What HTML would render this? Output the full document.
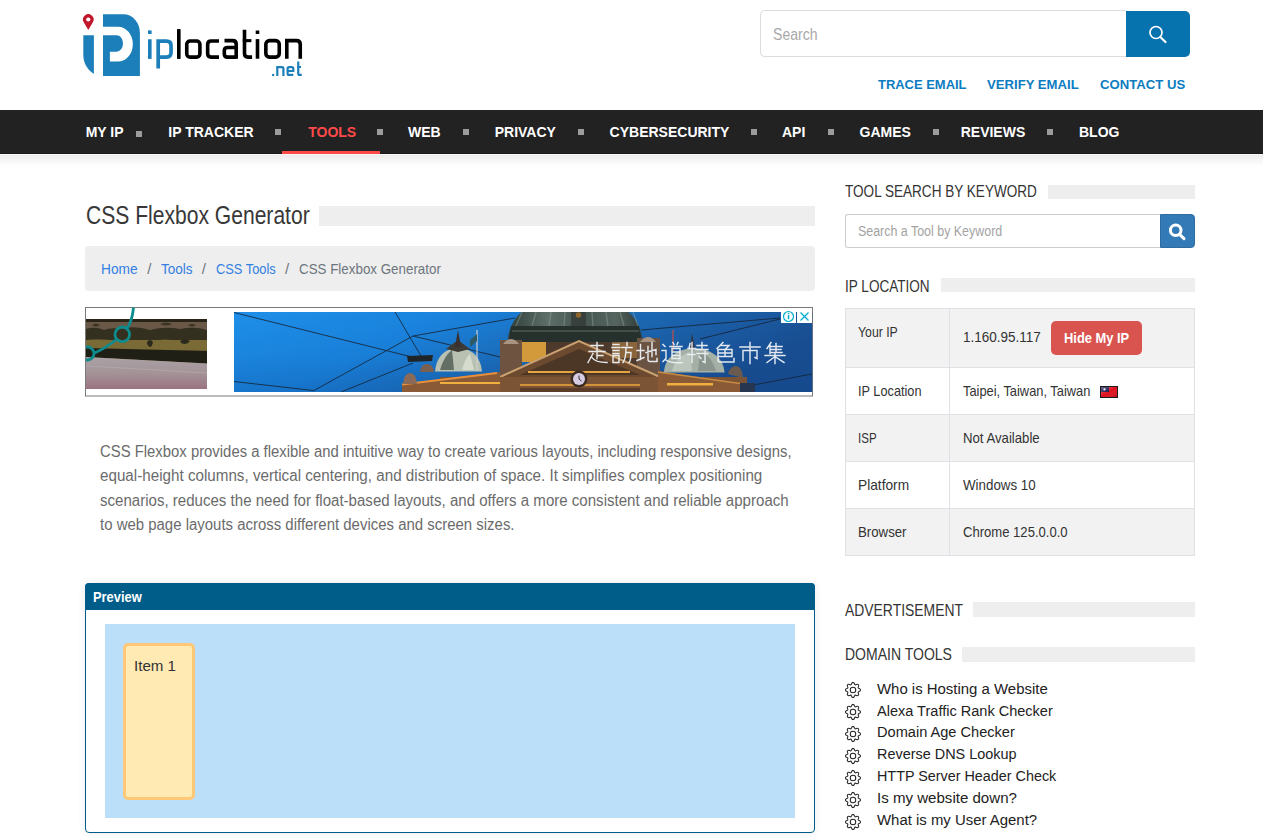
<!DOCTYPE html>
<html><head><meta charset="utf-8"><title>CSS Flexbox Generator</title>
<style>
html,body{margin:0;padding:0;background:#fff;width:1263px;height:840px;overflow:hidden;position:relative}
.b{position:absolute}
.t{position:absolute;white-space:nowrap;line-height:1;font-family:"Liberation Sans",sans-serif;transform-origin:0 0}
</style></head><body>
<svg class="b" style="left:0;top:0" width="320" height="90" viewBox="0 0 320 90">
<path fill="#c2172b" d="M88.3,29.9 L83.76,22.33 A5.3 5.3 0 1 1 92.84,22.33 Z"/>
<circle cx="88.3" cy="19.5" r="2.1" fill="#fff"/>
<g fill="#1c7fb9">
<path d="M83.3,35.2 H93.9 V74 C87.5,70 83.3,63 83.3,55 Z"/>
<path d="M103,14.2 H123.4 A16.5 18.7 0 0 1 139.9,32.9 V75.9 H103 Z"/>
</g>
<path fill="#fff" d="M103,26.7 H118 A14.8 17.45 0 0 1 118,61.6 H109.9 V51.7 H116.6 A6.4 8.25 0 0 0 116.6,35.2 H103 Z"/>
<g fill="none" stroke="#1c7fb9" stroke-width="3.7">
<path d="M158.2,68.6 V41.1 H166.5 Q171.05,41.1 171.05,45.5 V52.6 Q171.05,57.05 166.5,57.05 H158.2"/>
</g>
<g fill="#1c7fb9">
<rect x="148" y="30.4" width="3.6" height="3.6"/>
<rect x="148" y="39.25" width="3.6" height="19.65"/>
</g>
<g fill="none" stroke="#000" stroke-width="3.6">
<rect x="186.75" y="41.05" width="13.15" height="16.05" rx="3.3"/>
<path d="M219,41.05 H211.2 Q207.65,41.05 207.65,44.6 V53.5 Q207.65,57.1 211.2,57.1 H219"/>
<path d="M224.5,40.65 H232.6 Q236.2,40.65 236.2,44.3 V58.7"/>
<path d="M236.2,47.55 H227.6 Q224.3,47.55 224.3,50.8 V53.9 Q224.3,57.1 227.6,57.1 H236.2"/>
<path d="M244.5,29.8 V53.6 Q244.5,57.1 248,57.1 H252.1"/>
<rect x="265.85" y="40.65" width="13.4" height="16.45" rx="3.5"/>
<path d="M286.8,58.7 V40.65 H296.5 Q300.25,40.65 300.25,44.4 V58.7"/>
</g>
<g fill="#000">
<rect x="177" y="29.1" width="3.6" height="29.8"/>
<rect x="242.8" y="39.1" width="8.6" height="3.1"/>
<rect x="255.7" y="30.5" width="3.6" height="3.5"/>
<rect x="255.7" y="39.1" width="3.6" height="19.6"/>
</g>
<g fill="none" stroke="#1c7fb9" stroke-width="2.2">
<path d="M277.3,76 V67.1 H282 Q283.4,67.1 283.4,68.5 V76"/>
<path d="M293.3,74.9 H289.1 Q287.6,74.9 287.6,73.4 V68.6 Q287.6,67.1 289.1,67.1 H291.8 Q293.3,67.1 293.3,68.6 V71 H287.6"/>
<path d="M298.25,61.5 V73.4 Q298.25,74.9 299.8,74.9 H301.8"/>
</g>
<g fill="#1c7fb9">
<rect x="272.1" y="73.9" width="2.1" height="2.1"/>
<rect x="297.1" y="66" width="3.9" height="2"/>
</g>
</svg>
<div class="b" style="left:760px;top:10px;width:366px;height:47px;border:1px solid #dcdcdc;border-right:none;border-radius:5px 0 0 5px;box-sizing:border-box;background:#fff"></div>
<div class="t" style="left:772.7px;top:27.26px;font-size:16px;color:#a9a9a9;transform:scaleX(0.8797);">Search</div>
<div class="b" style="left:1126px;top:11px;width:64px;height:46px;background:#0673ae;border-radius:0 5px 5px 0"></div>
<svg class="b" style="left:1126px;top:11px" width="64" height="46"><circle cx="30" cy="21.5" r="6" fill="none" stroke="#fff" stroke-width="1.7"/><line x1="34.3" y1="26" x2="39.5" y2="31" stroke="#fff" stroke-width="2.2" stroke-linecap="round"/></svg>
<div class="t" style="left:878.4px;top:77.80px;font-size:13px;color:#0b7cc1;font-weight:700;transform:scaleX(0.9963);">TRACE EMAIL</div>
<div class="t" style="left:987.2px;top:77.80px;font-size:13px;color:#0b7cc1;font-weight:700;transform:scaleX(1.0102);">VERIFY EMAIL</div>
<div class="t" style="left:1099.6px;top:77.80px;font-size:13px;color:#0b7cc1;font-weight:700;transform:scaleX(1.0112);">CONTACT US</div>
<div class="b" style="left:0px;top:110px;width:1263px;height:44px;background:#222;border-bottom:1px solid #191919;box-sizing:border-box"></div>
<div class="b" style="left:0px;top:154px;width:1263px;height:1px;background:#f8f8f8"></div>
<div class="b" style="left:0px;top:155px;width:1263px;height:11px;background:linear-gradient(#ececec,#f7f7f7 55%,#fff)"></div>
<div class="t" style="left:85.7px;top:125.15px;font-size:14px;color:#fff;font-weight:700;">MY IP</div>
<div class="t" style="left:168.3px;top:125.15px;font-size:14px;color:#fff;font-weight:700;">IP TRACKER</div>
<div class="t" style="left:308.2px;top:125.15px;font-size:14px;color:#ff4a4a;font-weight:700;">TOOLS</div>
<div class="t" style="left:408.0px;top:125.15px;font-size:14px;color:#fff;font-weight:700;">WEB</div>
<div class="t" style="left:494.7px;top:125.15px;font-size:14px;color:#fff;font-weight:700;">PRIVACY</div>
<div class="t" style="left:609.6px;top:125.15px;font-size:14px;color:#fff;font-weight:700;">CYBERSECURITY</div>
<div class="t" style="left:782.0px;top:125.15px;font-size:14px;color:#fff;font-weight:700;">API</div>
<div class="t" style="left:859.5px;top:125.15px;font-size:14px;color:#fff;font-weight:700;">GAMES</div>
<div class="t" style="left:960.7px;top:125.15px;font-size:14px;color:#fff;font-weight:700;">REVIEWS</div>
<div class="t" style="left:1079.0px;top:125.15px;font-size:14px;color:#fff;font-weight:700;">BLOG</div>
<div class="b" style="left:136px;top:131px;width:6px;height:6px;background:#9c9c9c"></div>
<div class="b" style="left:275px;top:129px;width:6px;height:6px;background:#9c9c9c"></div>
<div class="b" style="left:377px;top:129px;width:6px;height:6px;background:#9c9c9c"></div>
<div class="b" style="left:463px;top:129px;width:6px;height:6px;background:#9c9c9c"></div>
<div class="b" style="left:578px;top:129px;width:6px;height:6px;background:#9c9c9c"></div>
<div class="b" style="left:751px;top:129px;width:6px;height:6px;background:#9c9c9c"></div>
<div class="b" style="left:828px;top:129px;width:6px;height:6px;background:#9c9c9c"></div>
<div class="b" style="left:933px;top:129px;width:6px;height:6px;background:#9c9c9c"></div>
<div class="b" style="left:1047px;top:129px;width:6px;height:6px;background:#9c9c9c"></div>
<div class="b" style="left:282px;top:151px;width:98px;height:3px;background:#ff4a4a"></div>
<div class="t" style="left:85.5px;top:203.34px;font-size:25px;color:#383838;transform:scaleX(0.8429);">CSS Flexbox Generator</div>
<div class="b" style="left:319px;top:206px;width:496px;height:20px;background:#eee"></div>
<div class="b" style="left:85px;top:246px;width:730px;height:45px;background:#eee;border-radius:4px"></div>
<div class="t" style="left:101.4px;top:261.10px;font-size:15px;color:#3380e3;transform:scaleX(0.9147);">Home</div>
<div class="t" style="left:147.3px;top:261.10px;font-size:15px;color:#6c757d;">/</div>
<div class="t" style="left:161.2px;top:261.10px;font-size:15px;color:#3380e3;transform:scaleX(0.9024);">Tools</div>
<div class="t" style="left:201.7px;top:261.10px;font-size:15px;color:#6c757d;">/</div>
<div class="t" style="left:216.2px;top:261.10px;font-size:15px;color:#3380e3;transform:scaleX(0.8572);">CSS Tools</div>
<div class="t" style="left:284.9px;top:261.10px;font-size:15px;color:#6c757d;">/</div>
<div class="t" style="left:299.1px;top:261.10px;font-size:15px;color:#6c757d;transform:scaleX(0.8911);">CSS Flexbox Generator</div>
<svg class="b" style="left:85px;top:307px" width="729" height="90" viewBox="85 307 729 90">
<defs>
<linearGradient id="sky" x1="0" y1="0" x2="1" y2="0.3">
<stop offset="0" stop-color="#1f8fe8"/><stop offset="0.35" stop-color="#1b84de"/><stop offset="0.62" stop-color="#1d6cb8"/><stop offset="1" stop-color="#1a4f92"/></linearGradient>
<linearGradient id="lake" x1="0" y1="0" x2="0" y2="1"><stop offset="0" stop-color="#aaa2a5"/><stop offset="0.5" stop-color="#a39397"/><stop offset="1" stop-color="#9b7281"/></linearGradient>
<linearGradient id="dome" x1="0" y1="0" x2="1" y2="0"><stop offset="0" stop-color="#2e3c38"/><stop offset="0.3" stop-color="#5d6f68"/><stop offset="0.55" stop-color="#44544f"/><stop offset="0.8" stop-color="#56655f"/><stop offset="1" stop-color="#2c3834"/></linearGradient>
<linearGradient id="bld" x1="0" y1="0" x2="0" y2="1"><stop offset="0" stop-color="#7d5232"/><stop offset="0.5" stop-color="#9a6434"/><stop offset="1" stop-color="#6e4a2c"/></linearGradient>
<linearGradient id="skyv" x1="0" y1="0" x2="0" y2="1"><stop offset="0" stop-color="#0a3a80" stop-opacity="0"/><stop offset="0.5" stop-color="#0a3a80" stop-opacity="0.05"/><stop offset="1" stop-color="#0a3a80" stop-opacity="0.22"/></linearGradient>
<clipPath id="cl"><rect x="86" y="319" width="121" height="70"/></clipPath>
<clipPath id="cm"><rect x="234" y="312" width="578.5" height="80"/></clipPath>
</defs>
<rect x="85.5" y="307.5" width="727" height="88.5" fill="#fff" stroke="#7a7a7a" stroke-width="1"/>
<g clip-path="url(#cl)">
<rect x="86" y="319" width="121" height="70" fill="#6e5e35"/>
<rect x="86" y="319" width="121" height="3" fill="#2a2418"/>
<rect x="86" y="322" width="121" height="10" fill="#6a5846"/>
<path d="M86,329 Q95,326 104,330 Q112,327 120,329 Q135,325 150,330 Q165,326 180,329 Q195,326 207,330 V341 Q195,339 180,341 Q165,338 150,341 Q135,339 120,341 Q100,338 86,340Z" fill="#33301f"/>
<path d="M92,325 q4,-3 8,0 q-4,3 -8,0Z M160,324 q6,-3 12,0 q-6,3 -12,0Z M188,325 q4,-2 8,0 q-4,3 -8,0Z" fill="#3a3526"/>
<rect x="86" y="340" width="121" height="10" fill="#7a6a36"/>
<path d="M147,342 q3,-4 6,0 q-1,5 -3,5 q-3,-1 -3,-5Z M180,341 q5,-3 10,0 q-2,3 -5,3 q-4,0 -5,-3Z" fill="#2a2a1c"/>
<path d="M86,348 L207,351 V363.5 L86,357Z" fill="#1f1f15"/>
<path d="M86,357 L207,363.5 V389 H86Z" fill="url(#lake)"/>
<path d="M86,366 Q140,369 207,373" stroke="#c0b8bc" stroke-width="1" fill="none" opacity=".45"/>
</g>
<clipPath id="cl2"><rect x="86" y="307" width="150" height="85"/></clipPath>
<g clip-path="url(#cl2)">
<path d="M133.5,307.5 Q132,322 127,328 M117,339 Q106,348 94.5,353" stroke="#0e8b8c" stroke-width="2.8" fill="none"/>
<circle cx="122.3" cy="334.3" r="7.3" stroke="#0e8b8c" stroke-width="2.8" fill="none"/>
<circle cx="87.5" cy="353.5" r="6.5" stroke="#0e8b8c" stroke-width="2.8" fill="none"/>
</g>
<g clip-path="url(#cm)">
<rect x="234" y="312" width="578.5" height="80" fill="url(#sky)"/>
<rect x="234" y="312" width="578.5" height="80" fill="url(#skyv)"/>
<g stroke="#16263a" stroke-width="1" fill="none" opacity=".85">
<path d="M234,312.5 L412,357"/>
<path d="M395,312 L421,356"/>
<path d="M313,391 L413,336 L515,318"/>
<path d="M341,392 L413,363"/>
<path d="M234,381.5 L313,390.5"/>
<path d="M413,336 L500,357"/>
<path d="M641,330 L780,318"/>
<path d="M700,339 L780,319"/>
<path d="M748,386 L812,374"/>
</g>
<path d="M407,356 L433,355 L432,361 L408,362Z" fill="#1e2428"/>
<!-- main dome -->
<path d="M507,346 L508,338 C510,325 516,314 530,306 L620,306 C634,314 640,325 642,338 L643,346Z" fill="url(#dome)"/>
<g stroke="#95a596" stroke-width="1.3" opacity=".45">
<line x1="522" y1="312" x2="516" y2="326"/><line x1="536" y1="312" x2="532" y2="326"/><line x1="551" y1="312" x2="549" y2="326"/><line x1="565" y1="312" x2="564" y2="326"/>
<line x1="592" y1="312" x2="593" y2="326"/><line x1="606" y1="312" x2="608" y2="326"/><line x1="620" y1="312" x2="624" y2="326"/><line x1="633" y1="312" x2="638" y2="326"/>
</g>
<path d="M511,326 H639 L641,342 H509Z" fill="#26302c"/>
<rect x="512" y="330" width="127" height="2" fill="#56655c" opacity=".6"/>
<circle cx="578.5" cy="315" r="2.8" fill="#f0a030"/>
<rect x="571" y="312" width="15" height="14" fill="#2a2a28" opacity=".5"/>
<!-- towers & walls -->
<rect x="500" y="340" width="22" height="52" fill="#6e5440"/>
<rect x="637" y="338" width="23" height="54" fill="#6a5242"/>
<path d="M503,344 Q511,334 519,344Z" fill="#a89480"/>
<path d="M640,342 Q648,332 656,342Z" fill="#a89480"/>
<rect x="522" y="342" width="24" height="20" fill="#d39a3c"/>
<rect x="546" y="342" width="91" height="35" fill="#4e3a2c"/>
<rect x="612" y="342" width="25" height="16" fill="#9a7040" opacity=".8"/>
<!-- pediment -->
<path d="M498,378 L579,340 L662,378Z" fill="#6c4a30"/>
<path d="M500,377 L579,341 L660,377" stroke="#c9a070" stroke-width="2" fill="none"/>
<path d="M520,375 L579,349 L640,375Z" fill="#4c3626"/>
<path d="M528,372 H630" stroke="#e6a440" stroke-width="2"/>
<!-- lower body -->
<rect x="440" y="377" width="307" height="15" fill="#7a5434"/>
<path d="M402,392 L402,384 L496,372.5 L500,372 L500,392Z" fill="#8a5a36"/>
<path d="M402,384.5 L497,373" stroke="#e8903a" stroke-width="2" fill="none"/>
<path d="M440,383 H500" stroke="#f0b040" stroke-width="1.8"/>
<rect x="520" y="384" width="120" height="2" fill="#e0a040" opacity=".85"/>
<rect x="520" y="388" width="120" height="4" fill="#5a3c28"/>
<path d="M403,384 Q404,373 410,373 Q416,373 417,384Z" fill="#8a6a58"/>
<path d="M420,372 Q421,364 427,364 Q433,364 434,372Z" fill="#7a6050"/>
<circle cx="579" cy="379" r="8.5" fill="#3a2a20"/>
<circle cx="579" cy="379" r="6" fill="#d6cde4"/>
<path d="M579,375.5 L579,379 L581.5,381" stroke="#3a3040" stroke-width="1" fill="none"/>
<!-- left dome -->
<path d="M435,371.5 Q437,350 458,347 Q480,350 482,371.5Z" fill="#b9c2b2"/>
<path d="M440,370 Q444,356 452,350 L454,370Z" fill="#3f4a44" opacity=".7"/>
<path d="M462,370 Q466,356 470,354 L474,370Z" fill="#e8ecdf" opacity=".6"/>
<path d="M446,349 L458,340 L470,349 L458,352Z" fill="#3e3a36"/>
<path d="M455,347 L458,330 L461,347Z" fill="#3a3030"/>
<line x1="477" y1="330" x2="477" y2="371" stroke="#d0d0d0" stroke-width="1.2"/>
<path d="M477,334 L470,340 L470,347 L477,341Z" fill="#2c5a66"/>
<!-- right building -->
<path d="M658,371 L740,383 L747,383 L747,392 L658,392Z" fill="#8a5a36"/>
<rect x="667" y="383" width="46" height="2.5" fill="#f0b040"/>
<path d="M658,372 L740,383.5" stroke="#c98a44" stroke-width="1.5" fill="none"/>
<path d="M663.7,372.5 Q666,350 694,348 Q722,350 724.7,372.5Z" fill="#a4b0a6"/>
<path d="M672,371 Q676,356 690,352 L692,371Z" fill="#cfd6cc" opacity=".6"/>
<path d="M698,371 L700,352 Q712,356 716,371Z" fill="#6f7c74" opacity=".5"/>
<path d="M690,349 L692,333 L695,349Z" fill="#2e3440"/>
<line x1="673" y1="330" x2="673" y2="352" stroke="#b05050" stroke-width="1.3"/>
<path d="M728,374 Q730,366 736,366 Q742,366 743,378Z" fill="#6a5a50"/>
<rect x="740" y="383" width="15" height="9" fill="#263650"/>
<g stroke="#eef2f6" stroke-width="1.45" fill="none" stroke-linecap="square" opacity=".95"><path transform="translate(587,342.5)" d="M4,3H16 M10,0V9 M2,9H18 M10,9V16 M10,13H16 M6,11L1,20 M5,15Q8,20 20,20"/><path transform="translate(612,342.5)" d="M1,2H7 M0,5H8 M1,8H7 M1,11H7 M1,13H7V20H1Z M15,0V3 M10,5H20 M14,5Q14,16 11,20 M14,10H19Q19,18 17,20"/><path transform="translate(637,342.5)" d="M0,8H7 M3.5,2V17 M0,18L7,15 M11,4V17Q11,19 13,19H20V16 M15,0V14 M9,10L19,7V12"/><path transform="translate(662,342.5)" d="M11,0L12,2 M16,0L15,2 M8,4H20 M10,6H18V16H10Z M10,9.5H18 M10,13H18 M1,2L3,4 M0,8H4V16L1,19 M3,17Q8,21 20,20"/><path transform="translate(688,342.5)" d="M2,1L1,6 M0,6H7 M0,12H7 M4,0V20 M9,3H19 M14,0V7 M8,7H20 M9,11H20 M17,9V20L15,19 M11,14L13,16"/><path transform="translate(715,342.5)" d="M8,0L2,6 M6,3H14L10,7 M3,7H17V14H3Z M10,7V14 M3,10.5H17 M3,14V18Q3,19.5 6,19.5H19V16"/><path transform="translate(740,342.5)" d="M10,0V3 M0,4.5H20 M3,8V18 M3,8H17V16L15,15 M10,4V21"/><path transform="translate(765,342.5)" d="M6,0L2,6 M5,3V11 M5,4H17 M11,1V10 M5,7H16 M5,10H17 M0,13H20 M10,11V21 M10,14L2,20 M10,14L19,20"/></g>
</g>
<rect x="781" y="310.5" width="15" height="12.5" fill="#fff"/>
<rect x="797" y="310.5" width="15" height="12.5" fill="#fff"/>
<circle cx="788.5" cy="316.5" r="5" stroke="#00aecd" stroke-width="1.2" fill="none"/>
<rect x="787.8" y="315" width="1.5" height="4.3" fill="#00aecd"/>
<rect x="787.8" y="312.8" width="1.5" height="1.4" fill="#00aecd"/>
<path d="M800.5,312.5 L808.5,320.5 M808.5,312.5 L800.5,320.5" stroke="#00aecd" stroke-width="1.3"/>
</svg>
<div class="t" style="left:100.0px;top:444.39px;font-size:15.6px;color:#6b6b6b;transform:scaleX(0.9534);">CSS Flexbox provides a flexible and intuitive way to create various layouts, including responsive designs,</div>
<div class="t" style="left:100.0px;top:468.49px;font-size:15.6px;color:#6b6b6b;transform:scaleX(0.9746);">equal-height columns, vertical centering, and distribution of space. It simplifies complex positioning</div>
<div class="t" style="left:100.0px;top:492.59px;font-size:15.6px;color:#6b6b6b;transform:scaleX(0.9657);">scenarios, reduces the need for float-based layouts, and offers a more consistent and reliable approach</div>
<div class="t" style="left:100.0px;top:516.69px;font-size:15.6px;color:#6b6b6b;transform:scaleX(0.9590);">to web page layouts across different devices and screen sizes.</div>
<div class="b" style="left:85px;top:583px;width:730px;height:250px;border:1px solid #005d8a;border-radius:4px;box-sizing:border-box;background:#fff;box-shadow:0 0 8px rgba(0,0,0,0.08)"></div>
<div class="b" style="left:85px;top:583px;width:730px;height:27px;background:#005d8a;border-radius:4px 4px 0 0"></div>
<div class="t" style="left:92.9px;top:590.05px;font-size:14px;color:#fff;font-weight:700;transform:scaleX(0.9202);">Preview</div>
<div class="b" style="left:105px;top:624px;width:690px;height:194px;background:#bbdef9"></div>
<div class="b" style="left:123px;top:643px;width:72px;height:157px;background:#ffeab3;border:3px solid #ffc876;border-radius:5px;box-sizing:border-box"></div>
<div class="t" style="left:133.8px;top:657.88px;font-size:15.5px;color:#333;transform:scaleX(0.9751);">Item 1</div>
<div class="t" style="left:845.0px;top:183.22px;font-size:16.4px;color:#333;transform:scaleX(0.8273);">TOOL SEARCH BY KEYWORD</div>
<div class="b" style="left:1048px;top:185px;width:147px;height:14px;background:#eee"></div>
<div class="b" style="left:845px;top:214px;width:315px;height:34px;border:1px solid #c9ced3;border-right:none;border-radius:3px 0 0 3px;box-sizing:border-box;background:#fff"></div>
<div class="t" style="left:857.8px;top:224.15px;font-size:14px;color:#a3a3a3;transform:scaleX(0.8880);">Search a Tool by Keyword</div>
<div class="b" style="left:1160px;top:214px;width:35px;height:34px;background:#337ab7;border:1px solid #2e6da4;box-sizing:border-box;border-radius:0 4px 4px 0"></div>
<svg class="b" style="left:1160px;top:214px" width="35" height="34"><circle cx="15.7" cy="16.3" r="5.3" fill="none" stroke="#fff" stroke-width="3"/><line x1="19.5" y1="20.3" x2="24" y2="24.6" stroke="#fff" stroke-width="3" stroke-linecap="round"/></svg>
<div class="t" style="left:845.0px;top:277.82px;font-size:16.4px;color:#333;transform:scaleX(0.8273);">IP LOCATION</div>
<div class="b" style="left:941px;top:278px;width:254px;height:14px;background:#eee"></div>
<div class="b" style="left:845px;top:308px;width:350px;height:60px;background:#f2f2f2;border:1px solid #dee2e6;box-sizing:border-box"></div>
<div class="b" style="left:845px;top:367px;width:350px;height:48px;background:#fff;border:1px solid #dee2e6;box-sizing:border-box"></div>
<div class="b" style="left:845px;top:414px;width:350px;height:48px;background:#f2f2f2;border:1px solid #dee2e6;box-sizing:border-box"></div>
<div class="b" style="left:845px;top:461px;width:350px;height:48px;background:#fff;border:1px solid #dee2e6;box-sizing:border-box"></div>
<div class="b" style="left:845px;top:508px;width:350px;height:48px;background:#f2f2f2;border:1px solid #dee2e6;box-sizing:border-box"></div>
<div class="b" style="left:949px;top:308px;width:1px;height:248px;background:#dee2e6"></div>
<div class="t" style="left:858.3px;top:324.73px;font-size:14.5px;color:#333;transform:scaleX(0.8463);">Your IP</div>
<div class="t" style="left:963.3px;top:329.83px;font-size:14.5px;color:#333;transform:scaleX(0.9307);">1.160.95.117</div>
<div class="b" style="left:1051px;top:321px;width:91px;height:34px;background:#d9534f;border-radius:5px"></div>
<div class="t" style="left:1064.3px;top:331.15px;font-size:14px;color:#fff;font-weight:700;transform:scaleX(0.9210);">Hide My IP</div>
<div class="t" style="left:858.3px;top:383.93px;font-size:14.5px;color:#333;transform:scaleX(0.8784);">IP Location</div>
<div class="t" style="left:962.8px;top:383.93px;font-size:14.5px;color:#333;transform:scaleX(0.8855);">Taipei, Taiwan, Taiwan</div>
<svg class="b" style="left:1099px;top:385px" width="20" height="14" viewBox="0 0 20 14">
<defs><linearGradient id="fg" x1="0" y1="0" x2="1" y2="1"><stop offset="0" stop-color="#fff" stop-opacity=".35"/><stop offset=".5" stop-color="#fff" stop-opacity="0"/><stop offset="1" stop-color="#000" stop-opacity=".2"/></linearGradient></defs>
<rect x="1" y="1" width="18" height="12" fill="#1a1a1a"/>
<rect x="2" y="2" width="16" height="10" fill="#e0101e"/>
<rect x="2" y="2" width="8" height="5" fill="#1b1650"/>
<circle cx="5.5" cy="4.3" r="1.1" fill="#fff"/>
<rect x="2" y="2" width="16" height="10" fill="url(#fg)"/>
</svg>
<div class="t" style="left:858.1px;top:430.63px;font-size:14.5px;color:#333;transform:scaleX(0.7958);">ISP</div>
<div class="t" style="left:962.5px;top:430.63px;font-size:14.5px;color:#333;transform:scaleX(0.9090);">Not Available</div>
<div class="t" style="left:858.1px;top:477.93px;font-size:14.5px;color:#333;transform:scaleX(0.9465);">Platform</div>
<div class="t" style="left:962.5px;top:477.93px;font-size:14.5px;color:#333;transform:scaleX(0.9205);">Windows 10</div>
<div class="t" style="left:858.1px;top:524.93px;font-size:14.5px;color:#333;transform:scaleX(0.9120);">Browser</div>
<div class="t" style="left:962.5px;top:524.93px;font-size:14.5px;color:#333;transform:scaleX(0.9011);">Chrome 125.0.0.0</div>
<div class="t" style="left:845.0px;top:601.82px;font-size:16.4px;color:#333;transform:scaleX(0.8482);">ADVERTISEMENT</div>
<div class="b" style="left:973px;top:602px;width:222px;height:15px;background:#eee"></div>
<div class="t" style="left:845.0px;top:646.42px;font-size:16.4px;color:#333;transform:scaleX(0.8549);">DOMAIN TOOLS</div>
<div class="b" style="left:962px;top:647px;width:233px;height:15px;background:#eee"></div>
<svg class="b" style="left:845px;top:682.0px" width="16" height="16" viewBox="0 0 16 16"><path fill="#222" d="M8 4.754a3.246 3.246 0 1 0 0 6.492 3.246 3.246 0 0 0 0-6.492zM5.754 8a2.246 2.246 0 1 1 4.492 0 2.246 2.246 0 0 1-4.492 0z M9.796 1.343c-.527-1.79-3.065-1.79-3.592 0l-.094.319a.873.873 0 0 1-1.255.52l-.292-.16c-1.64-.892-3.433.902-2.54 2.541l.159.292a.873.873 0 0 1-.52 1.255l-.319.094c-1.79.527-1.79 3.065 0 3.592l.319.094a.873.873 0 0 1 .52 1.255l-.16.292c-.892 1.64.901 3.434 2.541 2.54l.292-.159a.873.873 0 0 1 1.255.52l.094.319c.527 1.79 3.065 1.79 3.592 0l.094-.319a.873.873 0 0 1 1.255-.52l.292.16c1.64.893 3.434-.902 2.54-2.541l-.159-.292a.873.873 0 0 1 .52-1.255l.319-.094c1.79-.527 1.79-3.065 0-3.592l-.319-.094a.873.873 0 0 1-.52-1.255l.16-.292c.893-1.64-.902-3.433-2.541-2.54l-.292.159a.873.873 0 0 1-1.255-.52l-.094-.319zm-2.633.283c.246-.835 1.428-.835 1.674 0l.094.319a1.873 1.873 0 0 0 2.693 1.115l.291-.16c.764-.415 1.6.42 1.184 1.185l-.159.292a1.873 1.873 0 0 0 1.116 2.692l.318.094c.835.246.835 1.428 0 1.674l-.319.094a1.873 1.873 0 0 0-1.115 2.693l.16.291c.415.764-.42 1.6-1.185 1.184l-.291-.159a1.873 1.873 0 0 0-2.693 1.116l-.094.318c-.246.835-1.428.835-1.674 0l-.094-.319a1.873 1.873 0 0 0-2.692-1.115l-.292.16c-.764.415-1.6-.42-1.184-1.185l.159-.291A1.873 1.873 0 0 0 1.945 8.93l-.319-.094c-.835-.246-.835-1.428 0-1.674l.319-.094A1.873 1.873 0 0 0 3.06 4.377l-.16-.292c-.415-.764.42-1.6 1.185-1.184l.292.159a1.873 1.873 0 0 0 2.692-1.115l.094-.319z"/></svg>
<div class="t" style="left:876.6px;top:680.68px;font-size:15.5px;color:#222;transform:scaleX(0.9634);">Who is Hosting a Website</div>
<svg class="b" style="left:845px;top:704.0px" width="16" height="16" viewBox="0 0 16 16"><path fill="#222" d="M8 4.754a3.246 3.246 0 1 0 0 6.492 3.246 3.246 0 0 0 0-6.492zM5.754 8a2.246 2.246 0 1 1 4.492 0 2.246 2.246 0 0 1-4.492 0z M9.796 1.343c-.527-1.79-3.065-1.79-3.592 0l-.094.319a.873.873 0 0 1-1.255.52l-.292-.16c-1.64-.892-3.433.902-2.54 2.541l.159.292a.873.873 0 0 1-.52 1.255l-.319.094c-1.79.527-1.79 3.065 0 3.592l.319.094a.873.873 0 0 1 .52 1.255l-.16.292c-.892 1.64.901 3.434 2.541 2.54l.292-.159a.873.873 0 0 1 1.255.52l.094.319c.527 1.79 3.065 1.79 3.592 0l.094-.319a.873.873 0 0 1 1.255-.52l.292.16c1.64.893 3.434-.902 2.54-2.541l-.159-.292a.873.873 0 0 1 .52-1.255l.319-.094c1.79-.527 1.79-3.065 0-3.592l-.319-.094a.873.873 0 0 1-.52-1.255l.16-.292c.893-1.64-.902-3.433-2.541-2.54l-.292.159a.873.873 0 0 1-1.255-.52l-.094-.319zm-2.633.283c.246-.835 1.428-.835 1.674 0l.094.319a1.873 1.873 0 0 0 2.693 1.115l.291-.16c.764-.415 1.6.42 1.184 1.185l-.159.292a1.873 1.873 0 0 0 1.116 2.692l.318.094c.835.246.835 1.428 0 1.674l-.319.094a1.873 1.873 0 0 0-1.115 2.693l.16.291c.415.764-.42 1.6-1.185 1.184l-.291-.159a1.873 1.873 0 0 0-2.693 1.116l-.094.318c-.246.835-1.428.835-1.674 0l-.094-.319a1.873 1.873 0 0 0-2.692-1.115l-.292.16c-.764.415-1.6-.42-1.184-1.185l.159-.291A1.873 1.873 0 0 0 1.945 8.93l-.319-.094c-.835-.246-.835-1.428 0-1.674l.319-.094A1.873 1.873 0 0 0 3.06 4.377l-.16-.292c-.415-.764.42-1.6 1.185-1.184l.292.159a1.873 1.873 0 0 0 2.692-1.115l.094-.319z"/></svg>
<div class="t" style="left:876.6px;top:702.58px;font-size:15.5px;color:#222;transform:scaleX(0.9375);">Alexa Traffic Rank Checker</div>
<svg class="b" style="left:845px;top:725.9px" width="16" height="16" viewBox="0 0 16 16"><path fill="#222" d="M8 4.754a3.246 3.246 0 1 0 0 6.492 3.246 3.246 0 0 0 0-6.492zM5.754 8a2.246 2.246 0 1 1 4.492 0 2.246 2.246 0 0 1-4.492 0z M9.796 1.343c-.527-1.79-3.065-1.79-3.592 0l-.094.319a.873.873 0 0 1-1.255.52l-.292-.16c-1.64-.892-3.433.902-2.54 2.541l.159.292a.873.873 0 0 1-.52 1.255l-.319.094c-1.79.527-1.79 3.065 0 3.592l.319.094a.873.873 0 0 1 .52 1.255l-.16.292c-.892 1.64.901 3.434 2.541 2.54l.292-.159a.873.873 0 0 1 1.255.52l.094.319c.527 1.79 3.065 1.79 3.592 0l.094-.319a.873.873 0 0 1 1.255-.52l.292.16c1.64.893 3.434-.902 2.54-2.541l-.159-.292a.873.873 0 0 1 .52-1.255l.319-.094c1.79-.527 1.79-3.065 0-3.592l-.319-.094a.873.873 0 0 1-.52-1.255l.16-.292c.893-1.64-.902-3.433-2.541-2.54l-.292.159a.873.873 0 0 1-1.255-.52l-.094-.319zm-2.633.283c.246-.835 1.428-.835 1.674 0l.094.319a1.873 1.873 0 0 0 2.693 1.115l.291-.16c.764-.415 1.6.42 1.184 1.185l-.159.292a1.873 1.873 0 0 0 1.116 2.692l.318.094c.835.246.835 1.428 0 1.674l-.319.094a1.873 1.873 0 0 0-1.115 2.693l.16.291c.415.764-.42 1.6-1.185 1.184l-.291-.159a1.873 1.873 0 0 0-2.693 1.116l-.094.318c-.246.835-1.428.835-1.674 0l-.094-.319a1.873 1.873 0 0 0-2.692-1.115l-.292.16c-.764.415-1.6-.42-1.184-1.185l.159-.291A1.873 1.873 0 0 0 1.945 8.93l-.319-.094c-.835-.246-.835-1.428 0-1.674l.319-.094A1.873 1.873 0 0 0 3.06 4.377l-.16-.292c-.415-.764.42-1.6 1.185-1.184l.292.159a1.873 1.873 0 0 0 2.692-1.115l.094-.319z"/></svg>
<div class="t" style="left:876.6px;top:724.48px;font-size:15.5px;color:#222;transform:scaleX(0.9408);">Domain Age Checker</div>
<svg class="b" style="left:845px;top:747.9px" width="16" height="16" viewBox="0 0 16 16"><path fill="#222" d="M8 4.754a3.246 3.246 0 1 0 0 6.492 3.246 3.246 0 0 0 0-6.492zM5.754 8a2.246 2.246 0 1 1 4.492 0 2.246 2.246 0 0 1-4.492 0z M9.796 1.343c-.527-1.79-3.065-1.79-3.592 0l-.094.319a.873.873 0 0 1-1.255.52l-.292-.16c-1.64-.892-3.433.902-2.54 2.541l.159.292a.873.873 0 0 1-.52 1.255l-.319.094c-1.79.527-1.79 3.065 0 3.592l.319.094a.873.873 0 0 1 .52 1.255l-.16.292c-.892 1.64.901 3.434 2.541 2.54l.292-.159a.873.873 0 0 1 1.255.52l.094.319c.527 1.79 3.065 1.79 3.592 0l.094-.319a.873.873 0 0 1 1.255-.52l.292.16c1.64.893 3.434-.902 2.54-2.541l-.159-.292a.873.873 0 0 1 .52-1.255l.319-.094c1.79-.527 1.79-3.065 0-3.592l-.319-.094a.873.873 0 0 1-.52-1.255l.16-.292c.893-1.64-.902-3.433-2.541-2.54l-.292.159a.873.873 0 0 1-1.255-.52l-.094-.319zm-2.633.283c.246-.835 1.428-.835 1.674 0l.094.319a1.873 1.873 0 0 0 2.693 1.115l.291-.16c.764-.415 1.6.42 1.184 1.185l-.159.292a1.873 1.873 0 0 0 1.116 2.692l.318.094c.835.246.835 1.428 0 1.674l-.319.094a1.873 1.873 0 0 0-1.115 2.693l.16.291c.415.764-.42 1.6-1.185 1.184l-.291-.159a1.873 1.873 0 0 0-2.693 1.116l-.094.318c-.246.835-1.428.835-1.674 0l-.094-.319a1.873 1.873 0 0 0-2.692-1.115l-.292.16c-.764.415-1.6-.42-1.184-1.185l.159-.291A1.873 1.873 0 0 0 1.945 8.93l-.319-.094c-.835-.246-.835-1.428 0-1.674l.319-.094A1.873 1.873 0 0 0 3.06 4.377l-.16-.292c-.415-.764.42-1.6 1.185-1.184l.292.159a1.873 1.873 0 0 0 2.692-1.115l.094-.319z"/></svg>
<div class="t" style="left:876.6px;top:746.38px;font-size:15.5px;color:#222;transform:scaleX(0.9306);">Reverse DNS Lookup</div>
<svg class="b" style="left:845px;top:769.8px" width="16" height="16" viewBox="0 0 16 16"><path fill="#222" d="M8 4.754a3.246 3.246 0 1 0 0 6.492 3.246 3.246 0 0 0 0-6.492zM5.754 8a2.246 2.246 0 1 1 4.492 0 2.246 2.246 0 0 1-4.492 0z M9.796 1.343c-.527-1.79-3.065-1.79-3.592 0l-.094.319a.873.873 0 0 1-1.255.52l-.292-.16c-1.64-.892-3.433.902-2.54 2.541l.159.292a.873.873 0 0 1-.52 1.255l-.319.094c-1.79.527-1.79 3.065 0 3.592l.319.094a.873.873 0 0 1 .52 1.255l-.16.292c-.892 1.64.901 3.434 2.541 2.54l.292-.159a.873.873 0 0 1 1.255.52l.094.319c.527 1.79 3.065 1.79 3.592 0l.094-.319a.873.873 0 0 1 1.255-.52l.292.16c1.64.893 3.434-.902 2.54-2.541l-.159-.292a.873.873 0 0 1 .52-1.255l.319-.094c1.79-.527 1.79-3.065 0-3.592l-.319-.094a.873.873 0 0 1-.52-1.255l.16-.292c.893-1.64-.902-3.433-2.541-2.54l-.292.159a.873.873 0 0 1-1.255-.52l-.094-.319zm-2.633.283c.246-.835 1.428-.835 1.674 0l.094.319a1.873 1.873 0 0 0 2.693 1.115l.291-.16c.764-.415 1.6.42 1.184 1.185l-.159.292a1.873 1.873 0 0 0 1.116 2.692l.318.094c.835.246.835 1.428 0 1.674l-.319.094a1.873 1.873 0 0 0-1.115 2.693l.16.291c.415.764-.42 1.6-1.185 1.184l-.291-.159a1.873 1.873 0 0 0-2.693 1.116l-.094.318c-.246.835-1.428.835-1.674 0l-.094-.319a1.873 1.873 0 0 0-2.692-1.115l-.292.16c-.764.415-1.6-.42-1.184-1.185l.159-.291A1.873 1.873 0 0 0 1.945 8.93l-.319-.094c-.835-.246-.835-1.428 0-1.674l.319-.094A1.873 1.873 0 0 0 3.06 4.377l-.16-.292c-.415-.764.42-1.6 1.185-1.184l.292.159a1.873 1.873 0 0 0 2.692-1.115l.094-.319z"/></svg>
<div class="t" style="left:876.6px;top:768.28px;font-size:15.5px;color:#222;transform:scaleX(0.9264);">HTTP Server Header Check</div>
<svg class="b" style="left:845px;top:791.8px" width="16" height="16" viewBox="0 0 16 16"><path fill="#222" d="M8 4.754a3.246 3.246 0 1 0 0 6.492 3.246 3.246 0 0 0 0-6.492zM5.754 8a2.246 2.246 0 1 1 4.492 0 2.246 2.246 0 0 1-4.492 0z M9.796 1.343c-.527-1.79-3.065-1.79-3.592 0l-.094.319a.873.873 0 0 1-1.255.52l-.292-.16c-1.64-.892-3.433.902-2.54 2.541l.159.292a.873.873 0 0 1-.52 1.255l-.319.094c-1.79.527-1.79 3.065 0 3.592l.319.094a.873.873 0 0 1 .52 1.255l-.16.292c-.892 1.64.901 3.434 2.541 2.54l.292-.159a.873.873 0 0 1 1.255.52l.094.319c.527 1.79 3.065 1.79 3.592 0l.094-.319a.873.873 0 0 1 1.255-.52l.292.16c1.64.893 3.434-.902 2.54-2.541l-.159-.292a.873.873 0 0 1 .52-1.255l.319-.094c1.79-.527 1.79-3.065 0-3.592l-.319-.094a.873.873 0 0 1-.52-1.255l.16-.292c.893-1.64-.902-3.433-2.541-2.54l-.292.159a.873.873 0 0 1-1.255-.52l-.094-.319zm-2.633.283c.246-.835 1.428-.835 1.674 0l.094.319a1.873 1.873 0 0 0 2.693 1.115l.291-.16c.764-.415 1.6.42 1.184 1.185l-.159.292a1.873 1.873 0 0 0 1.116 2.692l.318.094c.835.246.835 1.428 0 1.674l-.319.094a1.873 1.873 0 0 0-1.115 2.693l.16.291c.415.764-.42 1.6-1.185 1.184l-.291-.159a1.873 1.873 0 0 0-2.693 1.116l-.094.318c-.246.835-1.428.835-1.674 0l-.094-.319a1.873 1.873 0 0 0-2.692-1.115l-.292.16c-.764.415-1.6-.42-1.184-1.185l.159-.291A1.873 1.873 0 0 0 1.945 8.93l-.319-.094c-.835-.246-.835-1.428 0-1.674l.319-.094A1.873 1.873 0 0 0 3.06 4.377l-.16-.292c-.415-.764.42-1.6 1.185-1.184l.292.159a1.873 1.873 0 0 0 2.692-1.115l.094-.319z"/></svg>
<div class="t" style="left:876.6px;top:790.18px;font-size:15.5px;color:#222;transform:scaleX(0.9724);">Is my website down?</div>
<svg class="b" style="left:845px;top:813.7px" width="16" height="16" viewBox="0 0 16 16"><path fill="#222" d="M8 4.754a3.246 3.246 0 1 0 0 6.492 3.246 3.246 0 0 0 0-6.492zM5.754 8a2.246 2.246 0 1 1 4.492 0 2.246 2.246 0 0 1-4.492 0z M9.796 1.343c-.527-1.79-3.065-1.79-3.592 0l-.094.319a.873.873 0 0 1-1.255.52l-.292-.16c-1.64-.892-3.433.902-2.54 2.541l.159.292a.873.873 0 0 1-.52 1.255l-.319.094c-1.79.527-1.79 3.065 0 3.592l.319.094a.873.873 0 0 1 .52 1.255l-.16.292c-.892 1.64.901 3.434 2.541 2.54l.292-.159a.873.873 0 0 1 1.255.52l.094.319c.527 1.79 3.065 1.79 3.592 0l.094-.319a.873.873 0 0 1 1.255-.52l.292.16c1.64.893 3.434-.902 2.54-2.541l-.159-.292a.873.873 0 0 1 .52-1.255l.319-.094c1.79-.527 1.79-3.065 0-3.592l-.319-.094a.873.873 0 0 1-.52-1.255l.16-.292c.893-1.64-.902-3.433-2.541-2.54l-.292.159a.873.873 0 0 1-1.255-.52l-.094-.319zm-2.633.283c.246-.835 1.428-.835 1.674 0l.094.319a1.873 1.873 0 0 0 2.693 1.115l.291-.16c.764-.415 1.6.42 1.184 1.185l-.159.292a1.873 1.873 0 0 0 1.116 2.692l.318.094c.835.246.835 1.428 0 1.674l-.319.094a1.873 1.873 0 0 0-1.115 2.693l.16.291c.415.764-.42 1.6-1.185 1.184l-.291-.159a1.873 1.873 0 0 0-2.693 1.116l-.094.318c-.246.835-1.428.835-1.674 0l-.094-.319a1.873 1.873 0 0 0-2.692-1.115l-.292.16c-.764.415-1.6-.42-1.184-1.185l.159-.291A1.873 1.873 0 0 0 1.945 8.93l-.319-.094c-.835-.246-.835-1.428 0-1.674l.319-.094A1.873 1.873 0 0 0 3.06 4.377l-.16-.292c-.415-.764.42-1.6 1.185-1.184l.292.159a1.873 1.873 0 0 0 2.692-1.115l.094-.319z"/></svg>
<div class="t" style="left:876.6px;top:812.08px;font-size:15.5px;color:#222;transform:scaleX(0.9630);">What is my User Agent?</div>
</body></html>
